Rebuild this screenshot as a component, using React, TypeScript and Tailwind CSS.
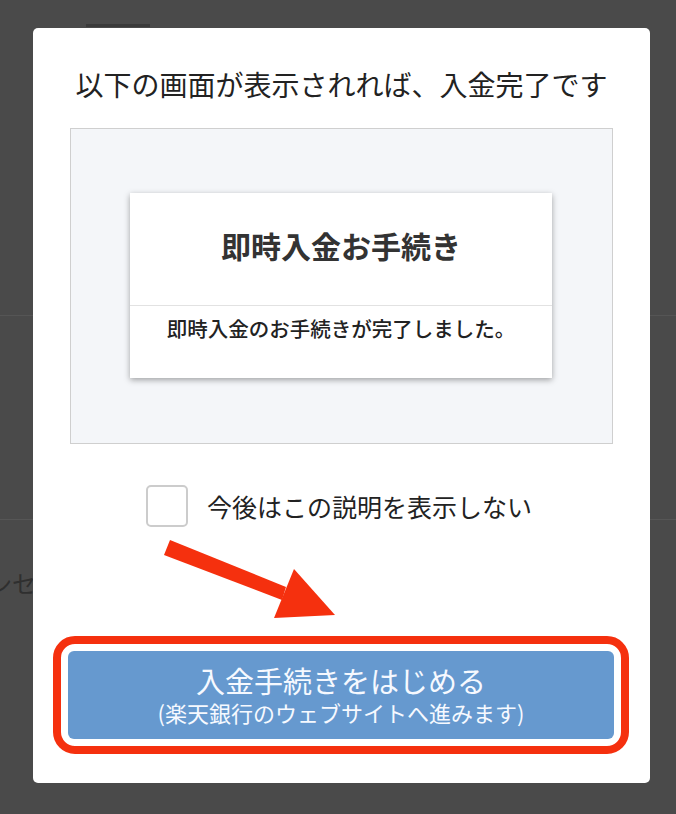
import React from "react";

const jp = { fontFamily: '"Noto Sans CJK JP", "Noto Sans", sans-serif' };

function Arrow() {
  // red pointer arrow drawn over the dialog
  return (
    <svg
      className="absolute left-0 top-0 pointer-events-none"
      width="617"
      height="755"
      viewBox="0 0 617 755"
    >
      <polygon
        points="131,527 137,512 253,559 249,572"
        fill="#f5300e"
      />
      <polygon points="241,590 302,587 261,541" fill="#f5300e" />
    </svg>
  );
}

export default function App() {
  return (
    <div className="relative w-full h-[814px] overflow-hidden bg-[#4a4a4a]" style={jp}>
      {/* dimmed page behind the overlay */}
      <div className="flex flex-col">
        <div className="h-[316px] border-b border-[#555555] pl-[86px] pt-[24px]">
          <div className="w-[64px] h-[3px] bg-[#3a3a3a]" />
        </div>
        <div className="h-[204px] border-b border-[#565656]" />
        <div className="pt-[48px] -ml-[12px] text-[24px] leading-[30px] text-[#2f2f2f]">ンセ</div>
      </div>

      {/* dialog */}
      <div className="absolute left-[33px] top-[28px] w-[617px] h-[755px] bg-white rounded-[5px] flex flex-col">
        <div className="pt-[37px] text-center text-[28px] leading-[38px] text-[#222222]">
          以下の画面が表示されれば、入金完了です
        </div>

        <div className="mt-[25px] ml-[37px] w-[543px] h-[316px] bg-[#f4f6f9] border border-[#cfcfcf] pt-[64px] pl-[59px]">
          <div className="w-[422px] h-[185px] bg-white shadow-[0_2px_6px_rgba(0,0,0,0.35)] flex flex-col">
            <div className="h-[112px] pt-[33px] text-center text-[30px] leading-[38px] font-bold text-[#333333]">
              即時入金お手続き
            </div>
            <div className="border-t border-[#e2e2e2] pt-[8px] text-center text-[20.5px] leading-[28px] font-medium text-[#222222]">
              即時入金のお手続きが完了しました。
            </div>
          </div>
        </div>

        <div className="mt-[41px] ml-[113px] flex items-center gap-[19px]">
          <div className="w-[42px] h-[42px] rounded-[5px] border-2 border-[#cccccc] bg-white" />
          <span className="text-[25px] leading-[34px] text-[#222222]">今後はこの説明を表示しない</span>
        </div>

        <div className="mt-auto mb-[29px] ml-[20px] w-[576px] rounded-[22px] border-[8px] border-[#f5300e] p-[7px]">
          <div className="h-[88px] rounded-[6px] bg-[#6699cf] flex flex-col items-center justify-center text-[#f6f9ff]">
            <div className="text-[29px] leading-[34px]">入金手続きをはじめる</div>
            <div className="text-[22px] leading-[30px]">(楽天銀行のウェブサイトへ進みます)</div>
          </div>
        </div>

        <Arrow />
      </div>
    </div>
  );
}
